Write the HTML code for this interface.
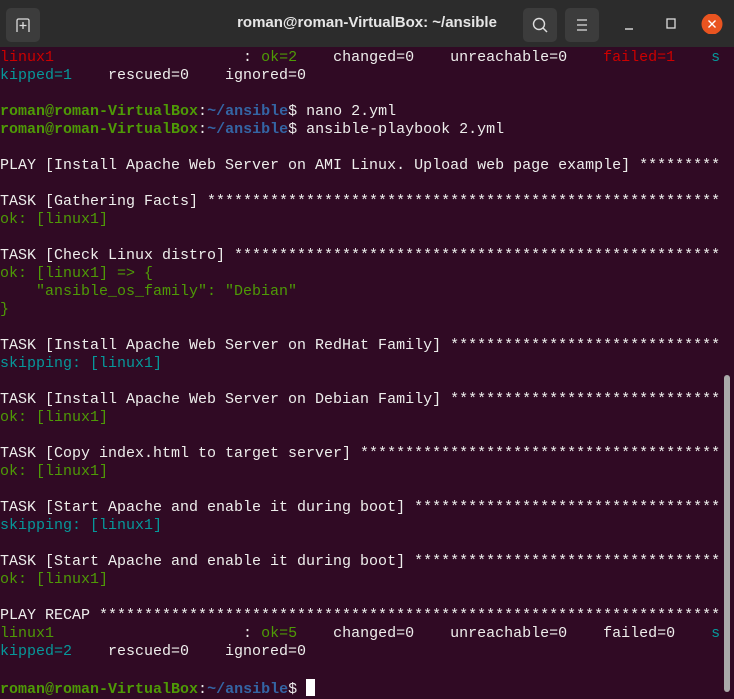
<!DOCTYPE html>
<html><head><meta charset="utf-8"><style>
html,body{margin:0;padding:0;width:734px;height:697px;overflow:hidden;background:#300a24;}
#tb{position:absolute;left:0;top:0;width:734px;height:47px;background:#2c2c2c;}
.btn{position:absolute;top:8px;width:34px;height:34px;background:#3c3c3c;border-radius:5px;}
#title{position:absolute;left:0;width:734px;top:14px;text-align:center;color:#e6e6e6;font:bold 15px "Liberation Sans",sans-serif;}
#term{position:absolute;left:0;top:49px;margin:0;font:15px/18px "Liberation Mono",monospace;color:#eeeeec;white-space:pre;}
.r{color:#cc0000}.g{color:#4e9a06}.c{color:#06989a}.pg{color:#4e9a06;font-weight:bold}.pb{color:#3465a4;font-weight:bold}
#cur{display:inline-block;width:9px;height:17px;background:#fff;vertical-align:-3px}
#sb{position:absolute;left:724px;top:375px;width:6px;height:317px;background:#aaa;border-radius:3px;}
</style></head><body>
<div id="tb">
<div class="btn" style="left:6px"><svg width="34" height="34"><path d="M11 24V12.5a1.5 1.5 0 0 1 1.5-1.5h9a1.5 1.5 0 0 1 1.5 1.5V24M17 14v7M13.5 17.5h7" stroke="#ddd" stroke-width="1.3" fill="none"/></svg></div>
<div id="title">roman@roman-VirtualBox: ~/ansible</div>
<div class="btn" style="left:523px"><svg width="34" height="34"><circle cx="16" cy="16" r="5.5" stroke="#ddd" stroke-width="1.4" fill="none"/><path d="M20 20l4 4" stroke="#ddd" stroke-width="1.5"/></svg></div>
<div class="btn" style="left:565px"><svg width="34" height="34"><path d="M12 12h10M12 17h10M12 22h10" stroke="#ddd" stroke-width="1.3"/></svg></div>
<svg style="position:absolute;left:620px;top:14px" width="114" height="20"><path d="M5 15h8" stroke="#ddd" stroke-width="1.4"/><rect x="47" y="5" width="8" height="9" stroke="#ddd" stroke-width="1.3" fill="none"/><circle cx="92" cy="10" r="10.5" fill="#e95420"/><path d="M88.5 6.5l7 7M95.5 6.5l-7 7" stroke="#fff" stroke-width="1.4"/></svg>
</div>
<pre id="term"><span class="r">linux1</span>                     : <span class="g">ok=2</span>    changed=0    unreachable=0    <span class="r">failed=1</span>    <span class="c">s</span>
<span class="c">kipped=1</span>    rescued=0    ignored=0

<span class="pg">roman@roman-VirtualBox</span>:<span class="pb">~/ansible</span>$ nano 2.yml
<span class="pg">roman@roman-VirtualBox</span>:<span class="pb">~/ansible</span>$ ansible-playbook 2.yml

PLAY [Install Apache Web Server on AMI Linux. Upload web page example] *********

TASK [Gathering Facts] *********************************************************
<span class="g">ok: [linux1]</span>

TASK [Check Linux distro] ******************************************************
<span class="g">ok: [linux1] => {
    "ansible_os_family": "Debian"
}</span>

TASK [Install Apache Web Server on RedHat Family] ******************************
<span class="c">skipping: [linux1]</span>

TASK [Install Apache Web Server on Debian Family] ******************************
<span class="g">ok: [linux1]</span>

TASK [Copy index.html to target server] ****************************************
<span class="g">ok: [linux1]</span>

TASK [Start Apache and enable it during boot] **********************************
<span class="c">skipping: [linux1]</span>

TASK [Start Apache and enable it during boot] **********************************
<span class="g">ok: [linux1]</span>

PLAY RECAP *********************************************************************
<span class="g">linux1</span>                     : <span class="g">ok=5</span>    changed=0    unreachable=0    failed=0    <span class="c">s</span>
<span class="c">kipped=2</span>    rescued=0    ignored=0

<span class="pg">roman@roman-VirtualBox</span>:<span class="pb">~/ansible</span>$ <span id="cur"></span></pre>
<div id="sb"></div>
</body></html>
